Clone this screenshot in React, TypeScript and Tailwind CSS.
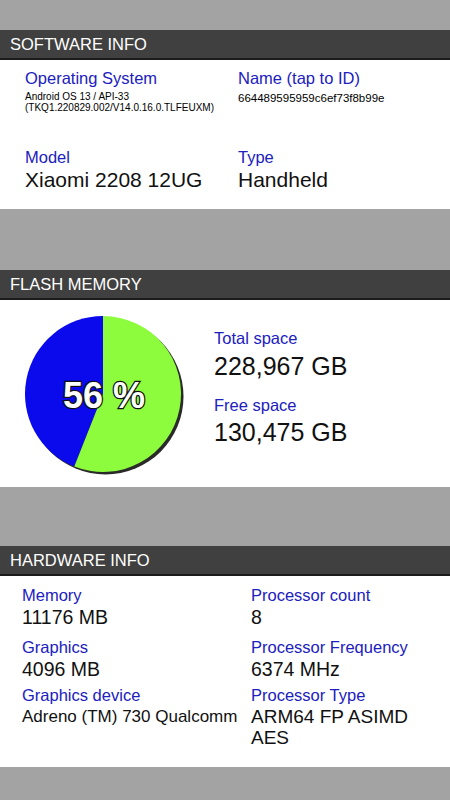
const font = { fontFamily: '"Liberation Sans", Arial, sans-serif' }

function SectionHeader({ title }: { title: string }) {
  return (
    <div className="h-[30px] bg-[#404040] border-b-2 border-[#1c1c1c] flex items-center pl-[10px]">
      <span className="text-white text-[16.5px] leading-[20px]">{title}</span>
    </div>
  )
}

function Label({ children }: { children: React.ReactNode }) {
  return <div className="text-[#2020bf] text-[16.5px] leading-[20px] whitespace-nowrap">{children}</div>
}

function FlashPie({ percent }: { percent: number }) {
  const cx = 85
  const cy = 85
  const r = 78
  const blueAngle = ((100 - percent) / 100) * Math.PI * 2
  const ex = cx - r * Math.sin(blueAngle)
  const ey = cy - r * Math.cos(blueAngle)

  return (
    <svg width="170" height="170" viewBox="0 0 170 170">
      <circle cx={cx + 2.5} cy={cy + 2.5} r={r} fill="#2a2a2a" />
      <path d={`M${cx} ${cy} L${cx} ${cy - r} A${r} ${r} 0 0 0 ${ex} ${ey} Z`} fill="#0a0aec" />
      <path d={`M${cx} ${cy} L${cx} ${cy - r} A${r} ${r} 0 1 1 ${ex} ${ey} Z`} fill="#8cfc3c" />
      <text
        x="86"
        y="99"
        textAnchor="middle"
        fontSize="36"
        fontWeight="bold"
        fill="#ffffff"
        stroke="#111111"
        strokeWidth="2.5"
        paintOrder="stroke"
        style={font}
      >
        {percent} %
      </text>
    </svg>
  )
}

export default function App() {
  return (
    <div className="w-[450px] h-[800px] bg-[#a3a3a3] pt-[30px] overflow-hidden" style={font}>
      {/* Software info */}
      <SectionHeader title="SOFTWARE INFO" />
      <div className="bg-white h-[149px] pl-[25px] pt-[7.5px]">
        <div className="grid grid-cols-[213px_1fr] h-[79px]">
          <div>
            <Label>Operating System</Label>
            <div className="text-black text-[10px] leading-[11px] mt-[3.5px]">
              Android OS 13 / API-33
              <br />
              (TKQ1.220829.002/V14.0.16.0.TLFEUXM)
            </div>
          </div>
          <div>
            <Label>Name (tap to ID)</Label>
            <div className="text-black text-[11.5px] leading-[13px] mt-[4px]">664489595959c6ef73f8b99e</div>
          </div>
        </div>
        <div className="grid grid-cols-[213px_1fr]">
          <div>
            <Label>Model</Label>
            <div className="text-[#111] text-[21px] leading-[24px] mt-[1px] whitespace-nowrap">Xiaomi 2208 12UG</div>
          </div>
          <div>
            <Label>Type</Label>
            <div className="text-[#111] text-[21px] leading-[24px] mt-[1px]">Handheld</div>
          </div>
        </div>
      </div>

      <div className="h-[61px]" />

      {/* Flash memory */}
      <SectionHeader title="FLASH MEMORY" />
      <div className="bg-white h-[187px] flex items-center pl-[18px]">
        <FlashPie percent={56} />
        <div className="ml-[26px] self-start pt-[28px]">
          <Label>Total space</Label>
          <div className="text-[#111] text-[25px] leading-[28px] mt-[3.5px]">228,967 GB</div>
          <div className="mt-[15px]">
            <Label>Free space</Label>
          </div>
          <div className="text-[#111] text-[25px] leading-[28px] mt-[3px]">130,475 GB</div>
        </div>
      </div>

      <div className="h-[59px]" />

      {/* Hardware info */}
      <SectionHeader title="HARDWARE INFO" />
      <div className="bg-white h-[191px] pl-[22px] pr-[20px] pt-[8.5px]">
        <div className="grid grid-cols-[229px_1fr]">
          <div>
            <Label>Memory</Label>
            <div className="text-[#111] text-[19.5px] leading-[22px] mt-[1px]">11176 MB</div>
          </div>
          <div>
            <Label>Processor count</Label>
            <div className="text-[#111] text-[19.5px] leading-[22px] mt-[1px]">8</div>
          </div>
        </div>
        <div className="grid grid-cols-[229px_1fr] mt-[9.5px]">
          <div>
            <Label>Graphics</Label>
            <div className="text-[#111] text-[19.5px] leading-[22px] mt-[0.5px]">4096 MB</div>
          </div>
          <div>
            <Label>Processor Frequency</Label>
            <div className="text-[#111] text-[19.5px] leading-[22px] mt-[0.5px]">6374 MHz</div>
          </div>
        </div>
        <div className="grid grid-cols-[229px_1fr] mt-[5px]">
          <div>
            <Label>Graphics device</Label>
            <div className="text-[#111] text-[17px] leading-[21px] mt-[1px] whitespace-nowrap">Adreno (TM) 730 Qualcomm</div>
          </div>
          <div>
            <Label>Processor Type</Label>
            <div className="text-[#111] text-[19px] leading-[21.5px] mt-[1px]">ARM64 FP ASIMD AES</div>
          </div>
        </div>
      </div>
    </div>
  )
}
